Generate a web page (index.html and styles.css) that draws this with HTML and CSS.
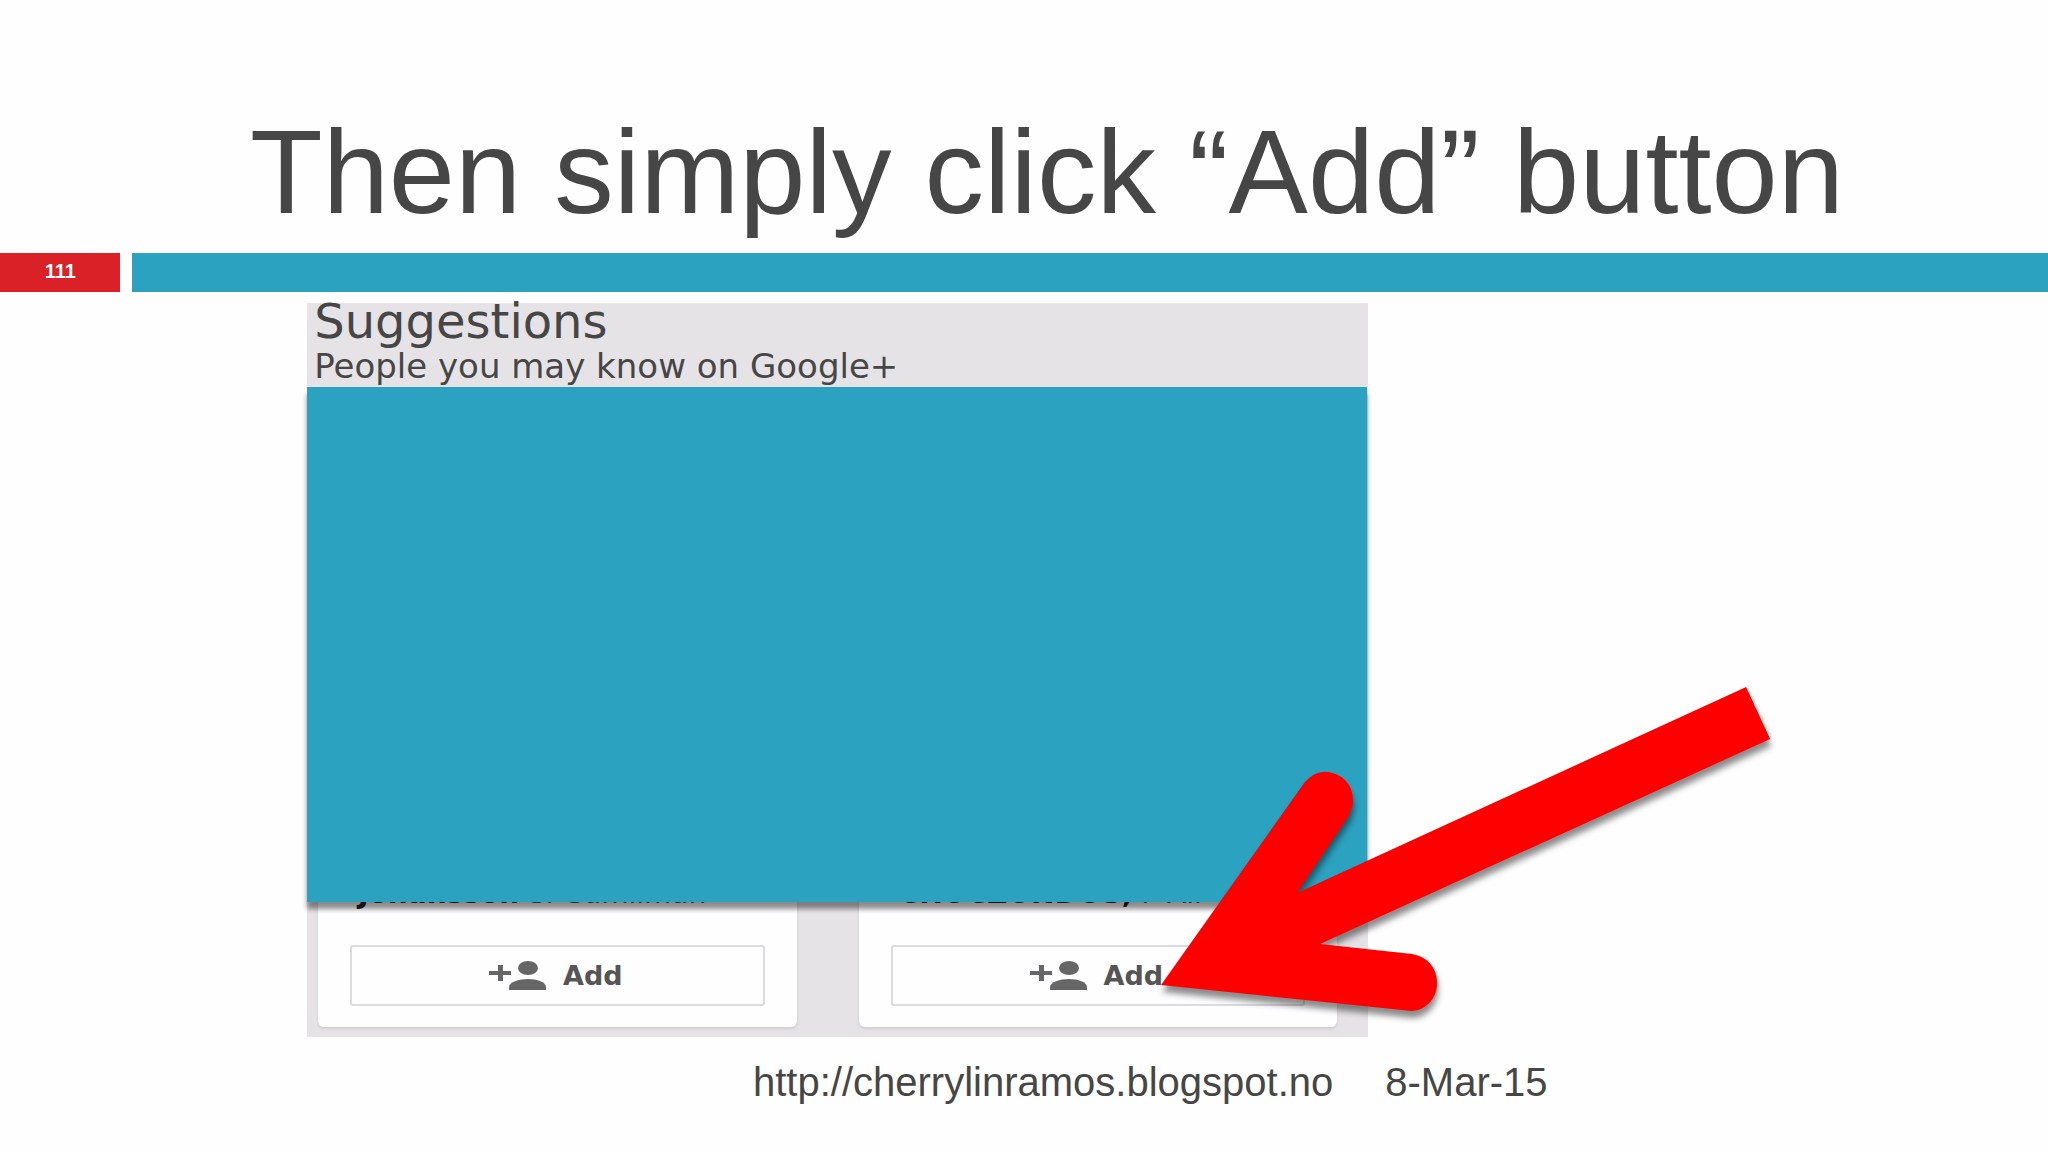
FILE: index.html
```
<!DOCTYPE html>
<html lang="en">
<head>
    <meta charset="UTF-8">
    <meta name="viewport" content="width=device-width, initial-scale=1.0">
    <title>Then simply click “Add” button</title>
    <link rel="stylesheet" href="styles.css">
</head>
<body>
    <header class="slide-header">
        <h1>Then simply click “Add” button</h1>
    </header>
    <div class="bar">
        <div class="page-number">111</div>
        <div class="bar-line"></div>
    </div>
    <main class="suggestions">
        <div class="suggestions-head">
            <h2>Suggestions</h2>
            <p>People you may know on Google+</p>
        </div>
        <div class="cover"></div>
        <div class="cards">
            <div class="card">
                <p class="name"><b>Johansson</b> Sr Samliman</p>
                <button class="add-button" type="button">
                    <svg class="add-icon" viewBox="0 0 58 30">
                        <path d="M9 4h5v6h8v4h-8v6H9v-6H0v-4h9z"/>
                        <ellipse cx="39" cy="7" rx="10" ry="7"/>
                        <path d="M20 29v-3c0-5 10-8 19-8s18 3 18 8v3z"/>
                    </svg>
                    Add
                </button>
            </div>
            <div class="card">
                <p class="name"><b>CHOCZONDOS,</b> P Air</p>
                <button class="add-button" type="button">
                    <svg class="add-icon" viewBox="0 0 58 30">
                        <path d="M9 4h5v6h8v4h-8v6H9v-6H0v-4h9z"/>
                        <ellipse cx="39" cy="7" rx="10" ry="7"/>
                        <path d="M20 29v-3c0-5 10-8 19-8s18 3 18 8v3z"/>
                    </svg>
                    Add
                </button>
            </div>
        </div>
        <svg class="arrow" viewBox="0 0 612 328">
            <path d="M0 298L141 99C149 87 160 84 166 85C181 86 192 98 192 113C192 119 190 124 187 130L136 206L585 0L609 52L159 257L251 267C267 270 276 281 276 296C276 312 264 324 250 324L241 323Z"/>
        </svg>
    </main>
    <footer class="slide-footer">
        <a href="http://cherrylinramos.blogspot.no">http://cherrylinramos.blogspot.no</a>
        <span>8-Mar-15</span>
    </footer>
</body>
</html>
```

FILE: styles.css
```
* {
    box-sizing: border-box;
}
body {
    margin: 0;
    background-color: #fefefe;
    color: #464646;
    font-family: "Liberation Sans", Arial, sans-serif;
}
h1, h2, p {
    margin: 0;
    font-weight: normal;
}
.slide-header {
    padding: 102px 0 11px 250px;
}
.slide-header h1 {
    font-size: 119px;
    line-height: 140px;
    white-space: nowrap;
}
.bar {
    display: flex;
    gap: 12px;
    height: 39px;
}
.page-number {
    width: 120px;
    padding-right: 44px;
    background-color: #da2128;
    color: #fff;
    font-size: 20px;
    font-weight: bold;
    line-height: 36px;
    text-align: right;
}
.bar-line {
    flex: 1;
    background-color: #2ca2c1;
}
.suggestions {
    position: relative;
    width: 51.8%;
    margin: 11px 0 0 15%;
    background-color: #e5e3e6;
    font-family: "DejaVu Sans", Verdana, sans-serif;
}
.suggestions-head {
    height: 84px;
    padding-left: 7px;
}
.suggestions-head h2 {
    font-size: 48px;
    line-height: 36px;
}
.suggestions-head p {
    font-size: 34px;
    line-height: 54px;
}
.cover {
    position: relative;
    height: 515px;
    margin-right: 1px;
    background-color: #2ca2c1;
    box-shadow: 0 7px 5px rgba(0, 0, 0, 0.45);
}
.cards {
    display: grid;
    grid-template-columns: 1fr 1fr;
    gap: 62px;
    padding: 0 31px 10px 11px;
}
.card {
    padding: 0 32px 21px;
    background-color: #fefdff;
    border-radius: 0 0 6px 6px;
    box-shadow: 0 2px 3px #cfcdd0;
}
/* the cover hides all but the foot of the names */
.name {
    height: 51px;
    margin-top: -8px;
    padding-left: 8px;
    color: #555;
    font-size: 28px;
    line-height: 0;
    white-space: nowrap;
}
.name b {
    color: #222;
}
.add-button {
    display: flex;
    align-items: center;
    justify-content: center;
    gap: 16px;
    width: 100%;
    height: 61px;
    padding: 0 3px 0 0;
    border: 2px solid #dcdadd;
    border-radius: 3px;
    background-color: #fefdff;
    color: #555;
    font-family: inherit;
    font-size: 27px;
    font-weight: bold;
}
.add-icon {
    width: 58px;
    height: 30px;
    fill: #666;
}
/* red pointer over the second Add button */
.arrow {
    position: absolute;
    left: 80.5%;
    bottom: 22px;
    width: 57.7%;
    overflow: visible;
    fill: #f00;
    filter: drop-shadow(1px 7px 3px rgba(0, 0, 0, 0.45));
}
.slide-footer {
    display: flex;
    gap: 52px;
    padding: 22px 0 0 753px;
    font-size: 40px;
    line-height: 46px;
}
.slide-footer a {
    color: inherit;
    text-decoration: none;
}
```
